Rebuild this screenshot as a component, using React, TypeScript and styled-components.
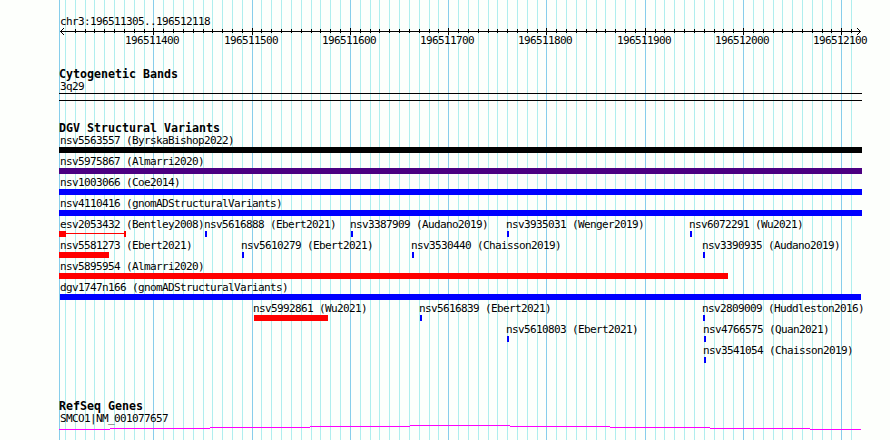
import React from 'react';
import { styled, createGlobalStyle } from 'styled-components';

type Feature = {
	name: string;
	x: number;
	color: string;
	// [start, width] of each block, relative to x
	blocks: [number, number][];
	labelX?: number;
};

const LEFT = 59;
const RIGHT = 862;

const BLUE = '#0000ff';
const RED = '#ff0000';

// genome position (last four digits) -> pixel
const toPixel = (position: number) => Math.floor(153.865 + 0.9828 * (position - 1400));

const range = (start: number, end: number, step: number) => {
	const res: number[] = [];

	for (let i = start; i <= end; i += step) res.push(i);

	return res;
};

const minorTicks = range(1310, 2110, 10);
const majorTicks = range(1400, 2100, 100);

const wide = (name: string, color: string): Feature => ({ name, x: 59, color, blocks: [[0, 803]], labelX: 60 });
const point = (name: string, x: number): Feature => ({ name, x, color: BLUE, blocks: [[0, 2]] });

const variantRows: Feature[][] = [
	[wide('nsv5563557 (ByrskaBishop2022)', '#000000')],
	[wide('nsv5975867 (Almarri2020)', '#4b0082')],
	[wide('nsv1003066 (Coe2014)', BLUE)],
	[wide('nsv4110416 (gnomADStructuralVariants)', BLUE)],
	[
		{
			name: 'esv2053432 (Bentley2008)',
			x: 59,
			color: RED,
			blocks: [
				[0, 7],
				[65, 2],
			],
			labelX: 60,
		},
		point('nsv5616888 (Ebert2021)', 205),
		point('nsv3387909 (Audano2019)', 351),
		point('nsv3935031 (Wenger2019)', 507),
		point('nsv6072291 (Wu2021)', 690),
	],
	[
		{ name: 'nsv5581273 (Ebert2021)', x: 59, color: RED, blocks: [[0, 50]], labelX: 60 },
		point('nsv5610279 (Ebert2021)', 242),
		point('nsv3530440 (Chaisson2019)', 412),
		point('nsv3390935 (Audano2019)', 703),
	],
	[{ name: 'nsv5895954 (Almarri2020)', x: 59, color: RED, blocks: [[0, 669]], labelX: 60 }],
	[{ name: 'dgv1747n166 (gnomADStructuralVariants)', x: 60, color: BLUE, blocks: [[0, 801]], labelX: 60 }],
	[
		{ name: 'nsv5992861 (Wu2021)', x: 254, color: RED, blocks: [[0, 74]] },
		point('nsv5616839 (Ebert2021)', 420),
		point('nsv2809009 (Huddleston2016)', 703),
	],
	[point('nsv5610803 (Ebert2021)', 507), point('nsv4766575 (Quan2021)', 704)],
	[point('nsv3541054 (Chaisson2019)', 704)],
];

// intron arc, one flat step every 100px
const geneSteps = [
	[59, 110, 429],
	[110, 210, 428],
	[210, 310, 427],
	[310, 410, 426],
	[410, 510, 425],
	[510, 610, 426],
	[610, 710, 427],
	[710, 810, 428],
	[810, 861, 429],
];

const Guides = () => (
	<GuideSvg width={890} height={440} shapeRendering="crispEdges">
		{minorTicks.map((tick) => (
			<rect key={tick} x={toPixel(tick)} y={0} width={1} height={440} fill="#afeeee" />
		))}
		{majorTicks.map((tick) => (
			<rect key={tick} x={toPixel(tick)} y={0} width={1} height={440} fill="#87ceeb" />
		))}
		<rect x={LEFT} y={0} width={1} height={440} fill="#87ceeb" />
	</GuideSvg>
);

const Ruler = () => (
	<RulerWrapper>
		<Label $x={60}>chr3:196511305..196512118</Label>

		<RulerSvg width={890} height={7} shapeRendering="crispEdges">
			<rect x={60} y={3} width={801} height={1} />
			{[1, 2, 3].map((d) => (
				<React.Fragment key={d}>
					<rect x={60 + d} y={3 - d} width={1} height={1} />
					<rect x={60 + d} y={3 + d} width={1} height={1} />
					<rect x={860 - d} y={3 - d} width={1} height={1} />
					<rect x={860 - d} y={3 + d} width={1} height={1} />
				</React.Fragment>
			))}
			{minorTicks.slice(1).map((tick) => (
				<rect key={tick} x={toPixel(tick)} y={1} width={1} height={4} />
			))}
			{majorTicks.map((tick) => (
				<rect key={tick} x={toPixel(tick)} y={0} width={1} height={7} />
			))}
		</RulerSvg>

		<Row>
			{majorTicks.map((tick) => (
				<Label key={tick} $x={toPixel(tick) - 28}>{`19651${tick}`}</Label>
			))}
		</Row>
	</RulerWrapper>
);

const VariantRow = ({ features }: { features: Feature[] }) => (
	<FeatureRow>
		{features.map(({ name, x, color, blocks, labelX }) => {
			const [lastStart, lastWidth] = blocks[blocks.length - 1];

			return (
				<React.Fragment key={name}>
					<Label $x={labelX ?? x - 1}>{name}</Label>

					<Glyph $x={x} $width={lastStart + lastWidth} $color={color}>
						{blocks.map(([start, width]) => (
							<Block key={start} $width={width} $color={color} />
						))}
					</Glyph>
				</React.Fragment>
			);
		})}
	</FeatureRow>
);

const App = () => (
	<Page>
		<GlobalStyle />
		<Guides />

		<Content>
			<Ruler />

			<Track $gap={20}>
				<Heading>Cytogenetic Bands</Heading>
				<Label $x={60}>3q29</Label>
				<Band />
			</Track>

			<Track $gap={21}>
				<Heading>DGV Structural Variants</Heading>
				{variantRows.map((features) => (
					<VariantRow key={features[0].name} features={features} />
				))}
			</Track>

			<Track $gap={35}>
				<Heading>RefSeq Genes</Heading>
				<Label $x={60}>SMCO1|NM_001077657</Label>

				<svg width={890} height={5} shapeRendering="crispEdges">
					{geneSteps.map(([start, end, y]) => (
						<rect key={start} x={start} y={y - 425} width={end - start} height={1} fill="#ff00ff" />
					))}
				</svg>
			</Track>
		</Content>
	</Page>
);

const GlobalStyle = createGlobalStyle`
	* {
		box-sizing: border-box;
	}

	body {
		margin: 0;
		background: #fdfffc;
		color: #000;
	}

	p, h2 {
		margin: 0;
	}

	svg {
		display: block;
	}
`;

const Page = styled.div`
	position: relative;
	width: 890px;
	height: 440px;
	overflow: hidden;
`;

const GuideSvg = styled.svg`
	position: absolute;
	inset: 0;
`;

const Content = styled.div`
	position: relative;
	padding-top: 15px;
`;

const RulerWrapper = styled.div`
	height: 33px;
`;

const RulerSvg = styled.svg`
	margin-bottom: -1px;
`;

const Track = styled.section<{ $gap: number }>`
	padding-top: ${({ $gap }) => $gap}px;
`;

const Row = styled.div`
	display: grid;
`;

const FeatureRow = styled.div`
	display: grid;
	grid-template-rows: 13px 6px;
	height: 21px;
`;

const Label = styled.p<{ $x: number }>`
	grid-area: 1 / 1;
	justify-self: start;
	height: 13px;
	margin-left: ${({ $x }) => $x}px;
	font-family: 'DejaVu Sans Mono', monospace;
	font-size: 11px;
	line-height: 13px;
	letter-spacing: -0.6226px;
	white-space: nowrap;
`;

const Heading = styled.h2`
	height: 12px;
	margin-left: ${LEFT}px;
	font-family: 'DejaVu Sans Mono', monospace;
	font-size: 11.63px;
	font-weight: 700;
	line-height: 12px;
	white-space: nowrap;
`;

const Band = styled.div`
	width: ${RIGHT - LEFT}px;
	height: 8px;
	margin-left: ${LEFT}px;
	border-top: 1px solid #000;
	border-bottom: 1px solid #000;
`;

const Glyph = styled.div<{ $x: number; $width: number; $color: string }>`
	grid-area: 2 / 1;
	display: flex;
	justify-content: space-between;
	width: ${({ $width }) => $width}px;
	margin-left: ${({ $x }) => $x}px;
	background: linear-gradient(${({ $color }) => $color}, ${({ $color }) => $color}) 0 2px / 100% 1px no-repeat;
`;

const Block = styled.div<{ $width: number; $color: string }>`
	width: ${({ $width }) => $width}px;
	height: 6px;
	background: ${({ $color }) => $color};
`;

export default App;
